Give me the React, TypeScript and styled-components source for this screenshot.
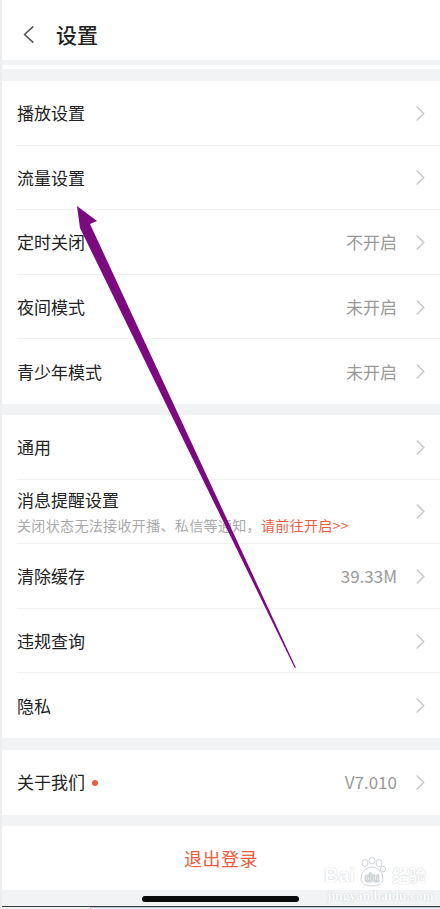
import React from "react";
import styled, { createGlobalStyle } from "styled-components";

const Global = createGlobalStyle`
  html, body { margin: 0; padding: 0; background: #ffffff; }
  body { font-family: "Noto Sans CJK SC", "Noto Sans", sans-serif; -webkit-font-smoothing: antialiased; }
  * { box-sizing: border-box; }
`;

const Page = styled.div`
  position: relative;
  width: 440px;
  height: 909px;
  overflow: hidden;
  background: #f1f3f4;
  border-left: 2px solid #eceef0;
  display: flex;
  flex-direction: column;
`;

const Header = styled.div`
  height: 60px;
  background: #fff;
  display: flex;
  align-items: center;
  padding-left: 21px;
  padding-top: 9px;
  gap: 22px;
`;

const Title = styled.div`
  font-size: 21px;
  font-weight: 500;
  color: #222;
  line-height: 1;
  margin-top: -1px;
`;

const Band = styled.div<{ $h: number; $white?: boolean }>`
  height: ${(p) => p.$h}px;
  background: ${(p) => (p.$white ? "#fff" : "#f1f3f4")};
  flex: none;
`;

const Group = styled.div`
  background: #fff;
  display: flex;
  flex-direction: column;
`;

const Row = styled.div<{ $last?: boolean }>`
  height: 64.6px;
  display: flex;
  align-items: center;
  padding-left: 15px;
  padding-right: 15px;
  position: relative;
  &::after {
    content: "";
    display: ${(p) => (p.$last ? "none" : "block")};
    position: absolute;
    left: 15px;
    right: 0;
    bottom: 0;
    height: 1px;
    background: #f0f1f2;
  }
`;

const LabelCol = styled.div`
  flex: 1;
  display: flex;
  flex-direction: column;
  justify-content: center;
  min-width: 0;
`;

const Label = styled.div`
  font-size: 17px;
  color: #222;
  line-height: 24px;
  display: flex;
  align-items: center;
`;

const Sub = styled.div`
  font-size: 14px;
  letter-spacing: 0.35px;
  color: #aaa;
  line-height: 20px;
  margin-top: 3px;
  white-space: nowrap;
`;

const SubLink = styled.span`
  color: #f05b3f;
`;

const Dot = styled.span`
  width: 6px;
  height: 6px;
  border-radius: 50%;
  background: #ef5a3c;
  margin-left: 7px;
  margin-top: 1px;
`;

const Value = styled.div`
  font-size: 17px;
  color: #999;
  margin-right: 19px;
  line-height: 24px;
`;

const Logout = styled.div`
  height: 64px;
  background: #fff;
  display: flex;
  align-items: center;
  justify-content: center;
  font-size: 18px;
  color: #ee5a3d;
  letter-spacing: 0.5px;
`;

const BottomArea = styled.div`
  height: 16px;
  display: flex;
  justify-content: center;
  align-items: center;
  padding-right: 2px;
`;

const HomeBar = styled.div`
  width: 157px;
  height: 6px;
  border-radius: 3px;
  background: #0a0a0a;
  margin-top: 2px;
`;

const EdgeLine = styled.div`
  height: 1px;
  background: #3a3a3a;
  flex: none;
`;

const EdgeStrip = styled.div`
  flex: 1;
  margin-left: 88px;
  border-top: 1px solid #b8c8d8;
  border-left: 1px solid #b8c8d8;
  background: #e8f0f8;
`;

const Overlay = styled.svg`
  position: absolute;
  left: -2px;
  top: 0;
  pointer-events: none;
`;

const Watermark = styled.div`
  position: absolute;
  left: 322px;
  top: 857px;
  display: flex;
  flex-direction: column;
  align-items: flex-start;
  pointer-events: none;
`;

const WmTop = styled.div`
  display: flex;
  align-items: flex-end;
  gap: 2px;
  font-family: "Liberation Sans", Arial, sans-serif;
  font-weight: 700;
  font-size: 20px;
  line-height: 20px;
  color: #fff;
  text-shadow: 0 0 1px #c9cfd3, 0 0 1px #c9cfd3;
`;

const WmCn = styled.span`
  font-family: "Noto Sans CJK SC", sans-serif;
  font-size: 17px;
  line-height: 20px;
  font-weight: 700;
  margin-left: 3px;
`;

const WmUrl = styled.div`
  font-family: "Liberation Serif", serif;
  font-weight: 700;
  font-size: 13px;
  color: #fff;
  text-shadow: 0 0 1px #c9cfd3, 0 0 1px #c9cfd3;
  margin-top: 3px;
  margin-left: 3px;
  letter-spacing: 0.2px;
`;

const Chevron = () => (
  <svg width="9" height="15" viewBox="0 0 9 15" fill="none">
    <path d="M1.2 1 L7.8 7.5 L1.2 14" stroke="#c9c9c9" strokeWidth="1.6" strokeLinecap="round" strokeLinejoin="round" />
  </svg>
);

const Back = () => (
  <svg width="11" height="17" viewBox="0 0 11 17" fill="none">
    <path d="M9.8 0.8 L1.5 8.5 L9.8 16.2" stroke="#555" strokeWidth="1.6" strokeLinecap="round" strokeLinejoin="round" />
  </svg>
);

type Item = { label: string; value?: string; sub?: boolean; dot?: boolean };

const group1: Item[] = [
  { label: "播放设置" },
  { label: "流量设置" },
  { label: "定时关闭", value: "不开启" },
  { label: "夜间模式", value: "未开启" },
  { label: "青少年模式", value: "未开启" },
];

const group2: Item[] = [
  { label: "通用" },
  { label: "消息提醒设置", sub: true },
  { label: "清除缓存", value: "39.33M" },
  { label: "违规查询" },
  { label: "隐私" },
];

const renderRows = (items: Item[]) =>
  items.map((it, i) => (
    <Row key={it.label} $last={i === items.length - 1}>
      <LabelCol>
        <Label>
          {it.label}
          {it.dot && <Dot />}
        </Label>
        {it.sub && (
          <Sub>
            关闭状态无法接收开播、私信等通知，<SubLink>请前往开启&gt;&gt;</SubLink>
          </Sub>
        )}
      </LabelCol>
      {it.value && <Value>{it.value}</Value>}
      <Chevron />
    </Row>
  ));

export default function App() {
  return (
    <>
      <Global />
      <Page>
        <Header>
          <Back />
          <Title>设置</Title>
        </Header>
        <Band $h={5} />
        <Band $h={4} $white />
        <Band $h={12} />
        <Group>{renderRows(group1)}</Group>
        <Band $h={11} />
        <Group>{renderRows(group2)}</Group>
        <Band $h={12} />
        <Group>{renderRows([{ label: "关于我们", value: "V7.010", dot: true }])}</Group>
        <Band $h={11} />
        <Logout>退出登录</Logout>
        <BottomArea>
          <HomeBar />
        </BottomArea>
        <EdgeLine />
        <EdgeStrip />

        <Watermark>
          <WmTop>
            <span>Bai</span>
            <svg width="30" height="30" viewBox="0 0 30 30" style={{ marginBottom: -2 }}>
              <g fill="#fff" stroke="#c9cfd3" strokeWidth="0.9">
                <ellipse cx="8" cy="6" rx="3" ry="3.6" />
                <ellipse cx="15" cy="3.6" rx="3" ry="3.4" />
                <ellipse cx="22" cy="6" rx="3" ry="3.6" />
                <ellipse cx="26" cy="12" rx="2.6" ry="3" />
                <path d="M4 22 C4 14 10 10 15 10 C20 10 26 14 26 22 C26 27 20 29 15 29 C10 29 4 27 4 22 Z" />
              </g>
              <text x="15" y="25" textAnchor="middle" fontFamily="Liberation Sans, Arial, sans-serif" fontWeight="700" fontSize="12" fill="#fff" stroke="#c9cfd3" strokeWidth="0.5">du</text>
            </svg>
            <WmCn>经验</WmCn>
          </WmTop>
          <WmUrl>jingyan.baidu.com</WmUrl>
        </Watermark>

        <Overlay width="440" height="909" viewBox="0 0 440 909">
          <polygon
            points="77,206 97,221 90,224 296,668 294.5,667.5 80,228"
            fill="#7b0a80"
          />
        </Overlay>
      </Page>
    </>
  );
}
